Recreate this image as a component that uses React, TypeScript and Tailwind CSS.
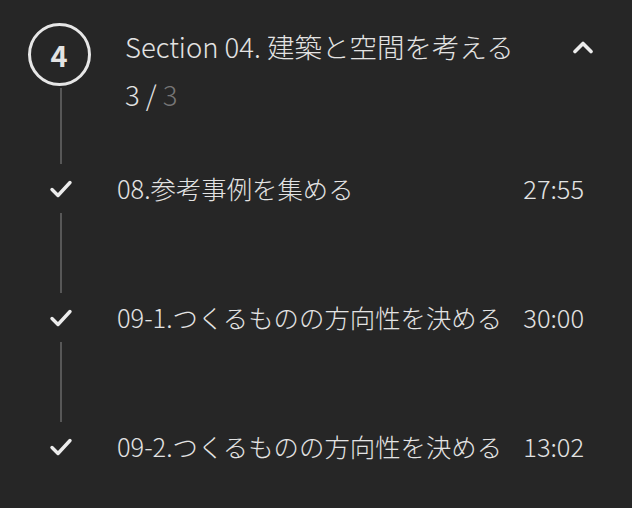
const items = [
  { title: "08.参考事例を集める", time: "27:55" },
  { title: "09-1.つくるものの方向性を決める", time: "30:00" },
  { title: "09-2.つくるものの方向性を決める", time: "13:02" },
];

function Check() {
  return (
    <svg width="24" height="20" viewBox="0 0 24 20" fill="none">
      <polyline
        points="3,10.5 9,16.5 21,3.5"
        stroke="#ececec"
        strokeWidth="3.4"
        strokeLinecap="round"
        strokeLinejoin="round"
      />
    </svg>
  );
}

function Line({ h }: { h: string }) {
  return <div className={`w-[2px] bg-[#575757] ${h}`} />;
}

export default function App() {
  return (
    <div
      className="h-[508px] w-full bg-[#262626] font-light text-[#e3e3e3]"
      style={{ fontFamily: '"Noto Sans CJK JP", "Noto Sans", sans-serif' }}
    >
      <div className="flex">
        <div className="flex w-[117px] flex-col items-center pt-[23px] pl-1">
          <div className="-ml-[3px] flex size-[63px] items-center justify-center rounded-full border-[3px] border-[#e6e6e6] text-[29px] font-bold leading-none">
            4
          </div>
          <div className="mt-[2px]">
            <Line h="h-[76px]" />
          </div>
        </div>
        <div className="flex flex-1 flex-col pt-[26px] pl-2">
          <div className="flex items-start justify-between pr-[38px]">
            <p className="text-[27.5px] leading-[40px]">Section 04. 建築と空間を考える</p>
            <svg width="22" height="14" viewBox="0 0 22 14" className="mt-[14px]" fill="none">
              <polyline
                points="3,11.5 11,3.5 19,11.5"
                stroke="#ececec"
                strokeWidth="3.6"
                strokeLinecap="round"
                strokeLinejoin="round"
              />
            </svg>
          </div>
          <p className="mt-[12px] text-[27.5px] leading-[32px]">
            3 / <span className="text-[#767676]">3</span>
          </p>
        </div>
      </div>

      {items.map((item, i) => (
        <div key={item.title}>
          <div className="flex h-[49px] items-center pr-[48px]">
            <div className="flex w-[117px] justify-center pl-1">
              <Check />
            </div>
            <p className="flex-1 text-[25.4px] leading-none">{item.title}</p>
            <p className="text-[25.4px] leading-none">{item.time}</p>
          </div>
          {i < items.length - 1 && (
            <div className="flex w-[117px] justify-center pl-1">
              <Line h="h-[80px]" />
            </div>
          )}
        </div>
      ))}
    </div>
  );
}
